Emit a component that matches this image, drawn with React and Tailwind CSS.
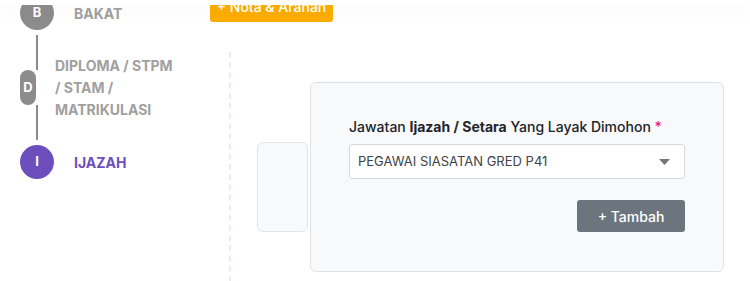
import React from "react";

function StepCircle({ letter, active, className = "" }) {
  return (
    <div
      className={`shrink-0 rounded-full flex items-center justify-center text-white text-[13px] font-bold ${
        active ? "bg-[#6c4fbd]" : "bg-[#8c8c8c]"
      } ${className}`}
    >
      {letter}
    </div>
  );
}

function Line({ className = "" }) {
  return <div className={`w-[2px] ml-[16px] bg-[#8c8c8c] ${className}`} />;
}

export default function App() {
  return (
    <div
      className="relative w-[750px] h-[281px] overflow-hidden bg-white"
      style={{ fontFamily: "Inter, 'Noto Sans', sans-serif" }}
    >
      {/* fixed header strip over content */}
      <div className="absolute top-0 left-0 right-0 h-[5px] bg-white shadow-[0_6px_18px_rgba(0,0,0,0.05)] z-10" />

      <div className="flex -mt-[4px]">
        {/* ================= STEPPER ================= */}
        <div className="w-[229px] shrink-0 pl-[20px] flex flex-col">
          <div className="flex items-center gap-[20px]">
            <StepCircle letter="B" className="w-[34px] h-[34px]" />
            <span className="text-[14px] font-bold text-[#a0a0a0]">BAKAT</span>
          </div>

          <div className="flex items-center mt-[5px]">
            <div className="w-[34px] flex flex-col items-start shrink-0">
              <Line className="h-[35px]" />
              <StepCircle letter="D" className="w-[16px] h-[35px]" />
              <Line className="h-[35px]" />
            </div>
            <div className="ml-[1px] text-[14px] font-bold leading-[22px] text-[#a0a0a0]">
              DIPLOMA / STPM
              <br />/ STAM /
              <br />
              MATRIKULASI
            </div>
          </div>

          <div className="flex items-center gap-[20px] mt-[5px]">
            <StepCircle letter="I" active className="w-[34px] h-[34px]" />
            <span className="text-[14px] font-bold text-[#6c4fbd]">IJAZAH</span>
          </div>
        </div>

        {/* ================= CONTENT ================= */}
        <div className="flex-1 flex flex-col">
          <div className="h-[56px]">
            <button className="block -ml-[19px] -mt-[6px] h-[32px] w-[123px] rounded-[3px] bg-[#fbad00] text-white text-[14px] font-medium">
              + Nota &amp; Arahan
            </button>
          </div>

          <div className="border-l-2 border-dashed border-[#e8edf3] h-[240px] px-[26px] pt-[30px] flex items-start gap-[2px]">
            <div className="w-[51px] h-[90px] mt-[60px] bg-[#f8f9fa] border border-[#e3e5e8] rounded-[6px] shrink-0" />

            <div className="w-[414px] h-[190px] bg-[#f8f9fa] border border-[#dee2e6] rounded-[6px] shrink-0 px-[38px] pt-[34px]">
              <label className="block text-[14px] leading-[20px] font-medium text-[#212529]">
                Jawatan <span className="font-bold">Ijazah / Setara</span> Yang Layak Dimohon{" "}
                <span className="text-[#ec1c79]">*</span>
              </label>

              <div className="mt-[7px] h-[35px] bg-white border border-[#d6d9dc] rounded-[3px] flex items-center justify-between pl-[8px] pr-[14px]">
                <span className="text-[13px] text-[#3d4348]">PEGAWAI SIASATAN GRED P41</span>
                <svg width="11" height="6" viewBox="0 0 11 6">
                  <path d="M0 0 L11 0 L5.5 6 Z" fill="#777" />
                </svg>
              </div>

              <div className="flex justify-end mt-[21px]">
                <button className="w-[108px] h-[32px] rounded-[3px] bg-[#6c757d] text-white text-[14px] font-medium">
                  + Tambah
                </button>
              </div>
            </div>
          </div>
        </div>
      </div>
    </div>
  );
}
